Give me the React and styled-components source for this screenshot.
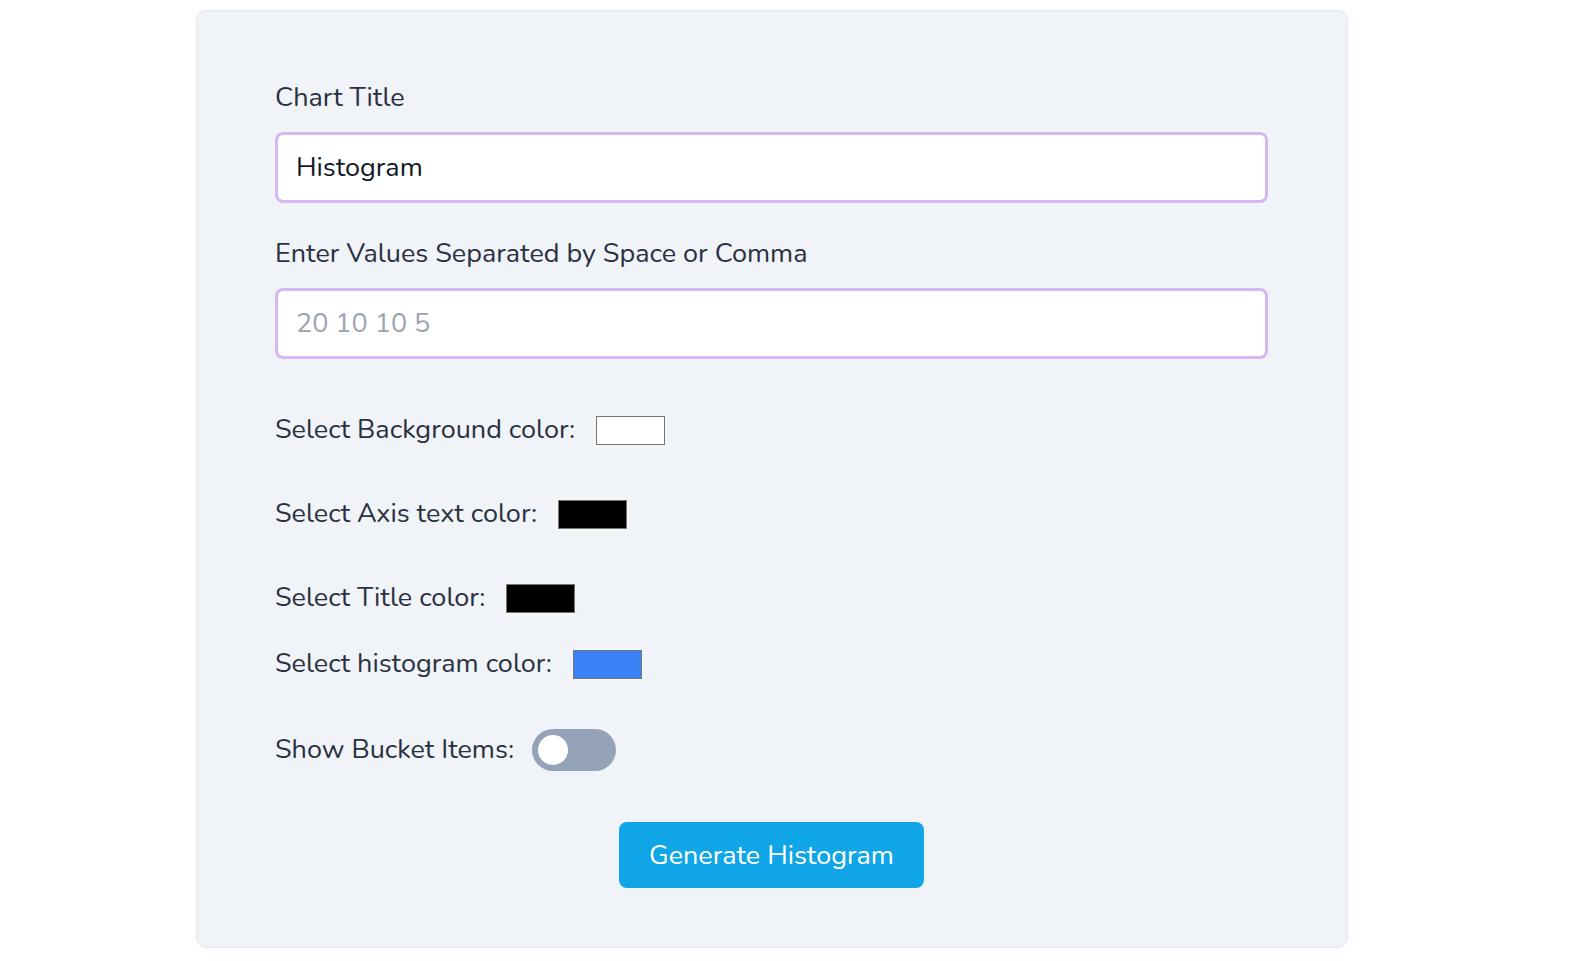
import React, { useState } from "react";
import styled, { createGlobalStyle } from "styled-components";

const Global = createGlobalStyle`
  * { box-sizing: border-box; }
  body {
    margin: 0;
    background: #ffffff;
    font-family: "Nunito", "Lato", "Noto Sans", sans-serif;
  }
`;

const Page = styled.div`
  padding: 10px 0 0 196px;
`;

const Card = styled.div`
  width: 1152px;
  height: 938px;
  background: #f0f3f8;
  border: 1px solid #e3e6eb;
  border-radius: 10px;
  padding: 69px 79px 0 78px;
  display: flex;
  flex-direction: column;
`;

const Label = styled.label`
  display: block;
  font-size: 27px;
  line-height: 36px;
  color: #2a3140;
  margin-top: ${(p) => p.$mt || 0}px;
`;

const TextInput = styled.input`
  display: block;
  width: 100%;
  height: 71px;
  margin-top: 16px;
  border: 3px solid #d5b8f3;
  border-radius: 8px;
  background: #ffffff;
  padding: 0 18px;
  font-family: inherit;
  font-size: 27px;
  color: #111827;
  outline: none;
  &::placeholder { color: #9ca3af; }
`;

const Row = styled.div`
  display: flex;
  align-items: center;
  height: 36px;
  margin-top: ${(p) => p.$mt}px;
`;

const RowText = styled.span`
  font-size: 27px;
  line-height: 36px;
  color: #2a3140;
`;

const SwatchFrame = styled.span`
  display: inline-flex;
  margin-left: 18px;
  padding: 3px;
  background: #f4f5f7;
  border-radius: 2px;
`;

const Swatch = styled.span`
  display: block;
  width: 69px;
  height: 29px;
  border: 1px solid #767676;
  background: ${(p) => p.$color};
`;

const Toggle = styled.button`
  margin-left: 18px;
  width: 84px;
  height: 42px;
  border: none;
  border-radius: 21px;
  background: ${(p) => (p.$on ? "#0ea5e9" : "#94a3b8")};
  padding: 0 6px;
  display: flex;
  align-items: center;
  justify-content: ${(p) => (p.$on ? "flex-end" : "flex-start")};
  cursor: pointer;
`;

const Knob = styled.span`
  width: 30px;
  height: 30px;
  border-radius: 50%;
  background: #ffffff;
`;

const ButtonRow = styled.div`
  display: flex;
  justify-content: center;
  margin-top: 54px;
`;

const Button = styled.button`
  width: 305px;
  height: 66px;
  border: none;
  border-radius: 8px;
  background: #10a5e6;
  color: #ffffff;
  font-family: inherit;
  font-size: 27px;
  cursor: pointer;
`;

export default function App() {
  const [on, setOn] = useState(false);
  return (
    <>
      <Global />
      <Page>
        <Card>
          <Label>Chart Title</Label>
          <TextInput defaultValue="Histogram" />
          <Label $mt={33}>Enter Values Separated by Space or Comma</Label>
          <TextInput placeholder="20 10 10 5" />
          <Row $mt={53}>
            <RowText>Select Background color:</RowText>
            <SwatchFrame><Swatch $color="#ffffff" /></SwatchFrame>
          </Row>
          <Row $mt={48}>
            <RowText>Select Axis text color:</RowText>
            <SwatchFrame><Swatch $color="#000000" /></SwatchFrame>
          </Row>
          <Row $mt={48}>
            <RowText>Select Title color:</RowText>
            <SwatchFrame><Swatch $color="#000000" /></SwatchFrame>
          </Row>
          <Row $mt={30}>
            <RowText>Select histogram color:</RowText>
            <SwatchFrame><Swatch $color="#3b82f6" /></SwatchFrame>
          </Row>
          <Row $mt={50}>
            <RowText>Show Bucket Items:</RowText>
            <Toggle $on={on} onClick={() => setOn(!on)} aria-label="toggle">
              <Knob />
            </Toggle>
          </Row>
          <ButtonRow>
            <Button>Generate Histogram</Button>
          </ButtonRow>
        </Card>
      </Page>
    </>
  );
}
